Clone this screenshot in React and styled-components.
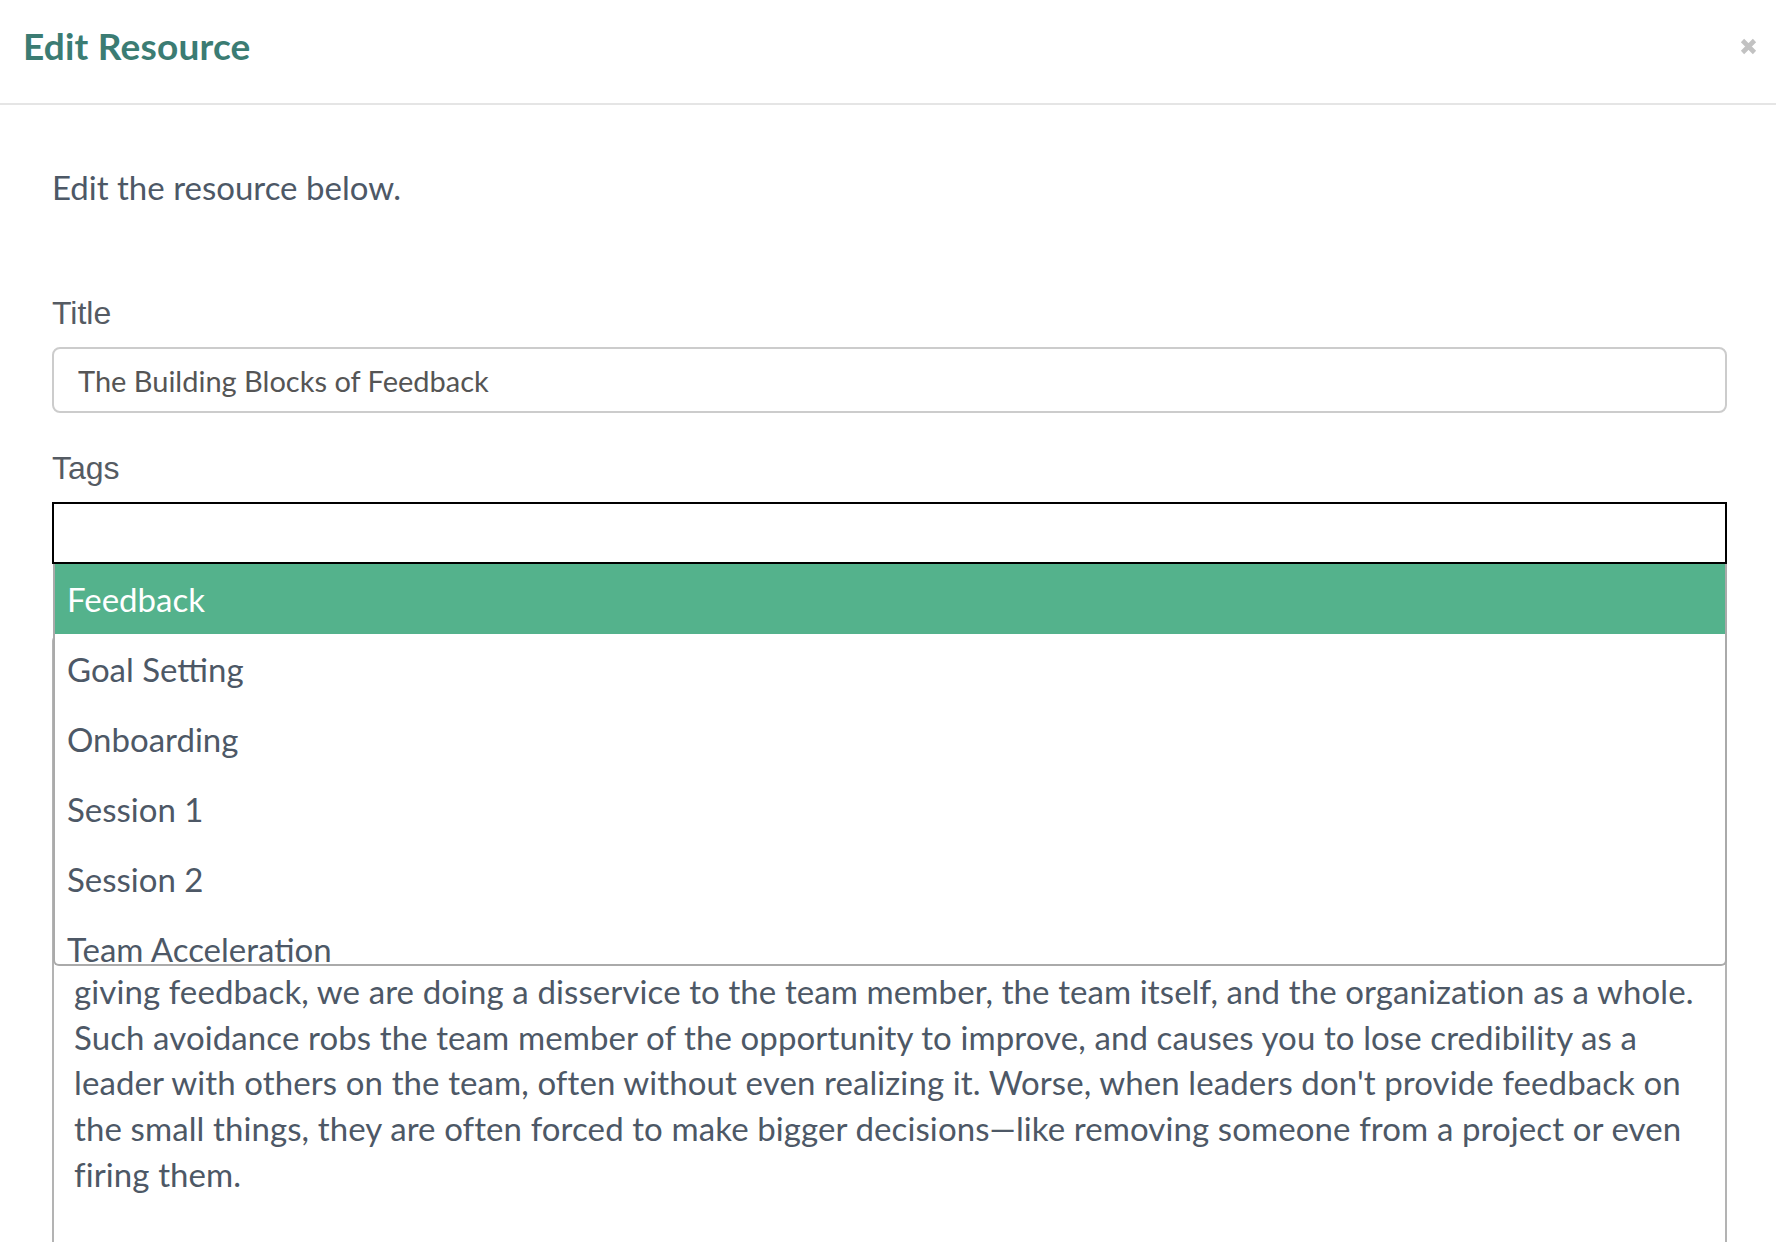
import React from 'react';
import styled, { createGlobalStyle } from 'styled-components';

const GlobalStyle = createGlobalStyle`
  html, body {
    margin: 0;
    background: #ffffff;
  }
  body {
    font-family: Lato, "Open Sans", sans-serif;
    color: #4d5866;
  }
`;

const tagOptions = ['Feedback', 'Goal Setting', 'Onboarding', 'Session 1', 'Session 2', 'Team Acceleration'];

const descriptionText = [
  'Feedback is one of the most essential tools a leader has for helping a team member grow and succeed.',
  'Yet many leaders hesitate to give it, especially when it is critical, because they worry about how',
  'the other person will react, or they simply want to avoid an uncomfortable conversation.',
  '',
  'The building blocks of feedback are simple: be specific, be timely, and focus on the behavior',
  'rather than the person. Feedback should be given often, in small doses, and with genuine care.',
  'When we let our own discomfort get in the way of',
  'giving feedback, we are doing a disservice to the team member, the team itself, and the organization as a whole.',
  'Such avoidance robs the team member of the opportunity to improve, and causes you to lose credibility as a',
  "leader with others on the team, often without even realizing it. Worse, when leaders don't provide feedback on",
  'the small things, they are often forced to make bigger decisions\u2014like removing someone from a project or even',
  'firing them.',
  '',
  '',
].join('\n');

const EditResource = () => {
  return (
    <Page>
      <GlobalStyle />
      <Header>
        <h2>Edit Resource</h2>
        <CloseButton aria-label="Close">
          <svg width="17" height="17" viewBox="0 0 17 17">
            <path d="M2.5 2.5 L14.5 14.5 M14.5 2.5 L2.5 14.5" stroke="currentColor" strokeWidth="4.6" />
          </svg>
        </CloseButton>
      </Header>
      <Body>
        <Intro>Edit the resource below.</Intro>
        <FormGroup>
          <Label>Title</Label>
          <TitleInput defaultValue="The Building Blocks of Feedback" />
        </FormGroup>
        <FormGroup $gap={14}>
          <Label>Tags</Label>
          <TagsWrap>
            <TagsInput />
            <Menu>
              {tagOptions.map((tag, i) => (
                <MenuItem key={tag} $active={i === 0}>{tag}</MenuItem>
              ))}
            </Menu>
          </TagsWrap>
        </FormGroup>
        <FormGroup>
          <Label>Description</Label>
          <Description wrap="off" defaultValue={descriptionText} />
        </FormGroup>
      </Body>
    </Page>
  );
};

export default EditResource;

const Page = styled.div`
  width: 100%;
  height: 1242px;
  overflow: hidden;
  background: #fff;
`;

const Header = styled.div`
  height: 105px;
  border-bottom: 2px solid #e5e5e5;
  display: flex;
  align-items: center;
  justify-content: space-between;
  padding: 0 19px 0 23px;
  box-sizing: border-box;
  h2 {
    margin: 0 0 12px;
    font-family: Lato, "Open Sans", sans-serif;
    font-weight: 700;
    font-size: 37px;
    color: #3b7c73;
    letter-spacing: 0.2px;
  }
`;

const CloseButton = styled.button`
  border: none;
  background: none;
  padding: 0;
  margin-bottom: 10px;
  color: #c2c2c2;
  display: flex;
  cursor: pointer;
`;

const Body = styled.div`
  padding: 59px 49px 0 52px;
`;

const Intro = styled.p`
  margin: 0 0 80px;
  font-size: 33px;
  line-height: 46px;
  color: #4d5866;
`;

const FormGroup = styled.div`
  margin-bottom: ${(p) => p.$gap ?? 32}px;
  display: flex;
  flex-direction: column;
`;

const Label = styled.label`
  font-family: "Liberation Sans", Arial, sans-serif;
  font-size: 32px;
  line-height: 46px;
  color: #555b63;
  margin-bottom: 11px;
`;

const TitleInput = styled.input`
  height: 66px;
  box-sizing: border-box;
  border: 2px solid #cccccc;
  border-radius: 8px;
  padding: 0 24px;
  font-family: Lato, "Open Sans", sans-serif;
  font-size: 29px;
  color: #555;
  outline: none;
`;

const TagsWrap = styled.div`
  position: relative;
`;

const TagsInput = styled.input`
  width: 100%;
  height: 62px;
  box-sizing: border-box;
  border: 2px solid #000;
  border-radius: 0;
  outline: none;
  display: block;
`;

const Menu = styled.ul`
  position: absolute;
  top: 100%;
  left: 1px;
  right: 0;
  margin: 0;
  padding: 0;
  list-style: none;
  height: 402px;
  overflow: hidden;
  background: #fff;
  border: 2px solid #aaaaaa;
  border-top: none;
  border-radius: 0 0 6px 6px;
  box-sizing: border-box;
  z-index: 10;
`;

const MenuItem = styled.li`
  height: 70px;
  line-height: 70px;
  padding: 0 12px;
  font-size: 33px;
  color: ${(p) => (p.$active ? '#ffffff' : '#4d5866')};
  background: ${(p) => (p.$active ? '#54b28c' : 'transparent')};
`;

const Description = styled.textarea`
  height: 700px;
  box-sizing: border-box;
  border: 2px solid #b3b3b3;
  border-radius: 6px;
  padding: 12px 20px;
  font-family: Lato, "Open Sans", sans-serif;
  font-size: 33px;
  letter-spacing: 0.1px;
  line-height: 45.7px;
  color: #4d5866;
  resize: none;
  overflow: hidden;
  outline: none;
`;
